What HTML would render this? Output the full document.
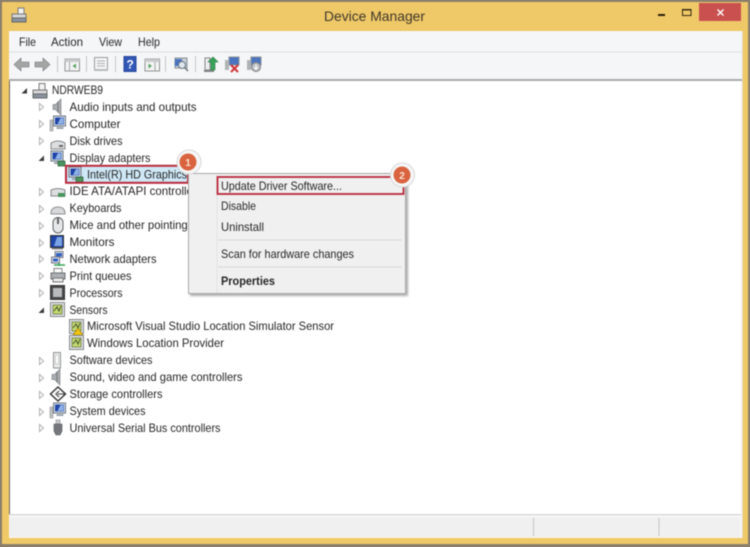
<!DOCTYPE html>
<html><head><meta charset="utf-8"><title>Device Manager</title>
<style>
html,body{margin:0;padding:0;background:#8b7f6c;width:750px;height:547px;overflow:hidden}
svg{display:block;filter:blur(.45px)}
text{font-family:"Liberation Sans",sans-serif;font-size:12px;fill:#262626}
</style></head><body>
<svg width="750" height="547" viewBox="0 0 750 547" xmlns="http://www.w3.org/2000/svg">
<defs>
<filter id="sh" x="-5%" y="-5%" width="110%" height="110%"><feGaussianBlur stdDeviation="1"/></filter>
<path id="ex" d="M39.500 .5v7l4-3.500z" fill="#fff" stroke="#b0b0b0" stroke-width="1"/>
<path id="col" d="M44 1.500v5.500h-5.500z" fill="#3a3a3a"/>
<g id="mon"><rect x="1" y="0" width="12" height="10" fill="#dfe6ee" stroke="#6a7480"/><rect x="2.500" y="1.500" width="9" height="7" fill="#1f45a8"/><path d="M8 2h3v6H5z" fill="#8fb2e6"/><rect x="4" y="11" width="7" height="2" fill="#9aa2a9"/></g>
<g id="card"><rect x="8" y="10" width="7" height="5" fill="#4a9460" stroke="#2a5c38" stroke-width=".7"/></g>
<g id="spk"><path d="M1 5.500h2.500L9 0v16L3.500 10.500H1z" fill="#a9adb1" stroke="#85898d" stroke-width=".7"/><path d="M6 2.500v11" stroke="#777"/></g>
<g id="sens"><rect x=".5" y=".5" width="14" height="14" fill="#dcdfe2" stroke="#85898d"/><rect x="3" y="3" width="9" height="9" fill="#c2da72" stroke="#5e6a33" stroke-width=".7"/><path d="M4 9l3-4 2 4 2-5" fill="none" stroke="#46532a"/></g>
</defs>

<!-- window frame -->
<rect x="-5" y="-5" width="760" height="557" fill="#8b7f6c"/>
<rect x="2" y="2" width="746" height="542" fill="#efc868"/>
<rect x="699" y="3" width="42" height="18" fill="#c9504f"/>
<path d="M717.500 9.500l6 6M723.500 9.500l-6 6" stroke="#fff" stroke-width="1.400"/>
<rect x="658" y="14" width="7" height="2" fill="#2a1f0a"/>
<rect x="682.500" y="9.500" width="8.500" height="6" fill="none" stroke="#35290f" stroke-width="1"/><rect x="682.500" y="9" width="8.500" height="1.500" fill="#35290f"/>
<text x="324" y="21" textLength="101" lengthAdjust="spacingAndGlyphs" style="font-size:14px;fill:#3f3728">Device Manager</text>
<!-- title icon -->
<g transform="translate(11,7)"><rect x="7" y="1" width="6" height="7" fill="#f2f2f2" stroke="#7a7a7a"/><rect x="1" y="7" width="14" height="4" fill="#d6d6d6" stroke="#777"/><rect x="1" y="11" width="14" height="4" fill="#8a94a0" stroke="#666"/></g>

<!-- client -->
<rect x="9" y="31" width="733" height="507" fill="#f5f6f7"/>
<rect x="742" y="31" width="1" height="507" fill="#e4d9b8"/>
<rect x="9" y="51.500" width="733" height="1" fill="#dedfe0"/>
<rect x="9" y="79" width="733" height="2" fill="#a9aaac"/>
<rect x="10" y="81" width="731" height="433" fill="#fff"/>
<rect x="9" y="81" width="1" height="433" fill="#6a675e"/>
<rect x="9" y="514" width="732" height="1.500" fill="#d8d8d8"/>
<rect x="9" y="515.500" width="732" height="1.500" fill="#fafafa"/>
<rect x="10" y="517" width="730" height="20" fill="#f0f0f0"/>
<rect x="9" y="537" width="732" height="1" fill="#faf6ea"/>
<rect x="533" y="518" width="1" height="18" fill="#c4c4c4"/>
<rect x="658.500" y="518" width="1" height="18" fill="#c4c4c4"/>

<!-- menu bar -->
<text x="19" y="46" textLength="17" lengthAdjust="spacingAndGlyphs">File</text>
<text x="51" y="46" textLength="32" lengthAdjust="spacingAndGlyphs">Action</text>
<text x="99" y="46" textLength="23" lengthAdjust="spacingAndGlyphs">View</text>
<text x="138" y="46" textLength="22" lengthAdjust="spacingAndGlyphs">Help</text>

<!-- toolbar -->
<g fill="#a3a5a5" stroke="#8a8c8d" stroke-width=".8" stroke-linejoin="round">
<path d="M14 64.500l7-6.500v4h8v5h-8v4z"/>
<path d="M50 64.500l-7-6.500v4h-8v5h8v4z"/>
</g>
<g fill="#c4c6c7"><rect x="57" y="56" width="1" height="16"/><rect x="86" y="56" width="1" height="16"/><rect x="115" y="56" width="1" height="16"/><rect x="165" y="56" width="1" height="16"/><rect x="195" y="56" width="1" height="16"/></g>
<rect x="65" y="59" width="14.500" height="12" fill="#f3f3f3" stroke="#909395"/><rect x="65" y="59" width="14.500" height="3" fill="#c8cbcd"/><path d="M69.500 62v9" stroke="#a4a6a8"/><path d="M76 63.500v5l-3.500-2.500z" fill="#5aa566"/>
<rect x="94.500" y="57.500" width="13" height="13" fill="#f5f5f5" stroke="#999c9e"/><path d="M97 61h8M97 63.500h8M97 66h8" stroke="#b0b3b5"/><rect x="94" y="69" width="14" height="2" fill="#b8bbbd"/>
<rect x="124" y="56.500" width="12" height="15" fill="#3156b6" stroke="#284699"/><text x="126.500" y="68.500" style="font-size:12px;font-weight:bold;fill:#fff">?</text>
<rect x="145" y="59" width="14.500" height="12" fill="#f3f3f3" stroke="#909395"/><rect x="145" y="59" width="14.500" height="3" fill="#c8cbcd"/><path d="M155 62v9" stroke="#a4a6a8"/><path d="M148.500 63.500v5l3.500-2.500z" fill="#5aa566"/>
<rect x="175" y="58" width="12" height="10" fill="#c8cfd6" stroke="#8a9198"/><rect x="175" y="59" width="7" height="7" fill="#4a74c0"/><circle cx="182" cy="65" r="3.500" fill="#dfe7ee" stroke="#6b7680"/><path d="M185 68l3 3" stroke="#6b7680" stroke-width="1.500"/>
<rect x="205" y="58" width="5" height="12" fill="#eee" stroke="#808386"/><rect x="204" y="70" width="10" height="2" fill="#808386"/><path d="M213 57l5 5h-3v8h-4v-8h-3z" fill="#38a35b" stroke="#2a7a45" stroke-width=".6"/>
<rect x="229" y="57" width="10" height="8" fill="#4a74c0" stroke="#8a9198"/><rect x="225" y="60" width="4" height="10" fill="#b0b3b6"/><path d="M231 65l7 7M238 65l-7 7" stroke="#d1333a" stroke-width="2"/>
<rect x="251" y="57" width="10" height="8" fill="#4a74c0" stroke="#8a9198"/><rect x="247" y="60" width="4" height="10" fill="#b0b3b6"/><circle cx="256" cy="67" r="4.500" fill="#bcbfc2" stroke="#7c7f82"/><path d="M256 64.500v4M254 67l2 2.500 2-2.500" fill="none" stroke="#fff"/>

<!-- expanders -->
<use href="#col" transform="translate(-17,86.500)"/>
<use href="#ex" y="103"/><use href="#ex" y="120"/><use href="#ex" y="137"/>
<use href="#col" y="154"/>
<use href="#ex" y="188"/><use href="#ex" y="205"/><use href="#ex" y="222"/><use href="#ex" y="239"/><use href="#ex" y="255"/><use href="#ex" y="272"/><use href="#ex" y="289"/>
<use href="#col" y="306"/>
<use href="#ex" y="357"/><use href="#ex" y="374"/><use href="#ex" y="391"/><use href="#ex" y="408"/><use href="#ex" y="424"/>

<!-- root icon -->
<g transform="translate(32,83)"><rect x="7" y="0.500" width="6" height="7" fill="#f2f2f2" stroke="#7a7a7a"/><rect x="1" y="7" width="14" height="4" fill="#d6d6d6" stroke="#777"/><rect x="1" y="11" width="14" height="4" fill="#8a94a0" stroke="#666"/></g>
<!-- tree icons -->
<use href="#spk" transform="translate(52,99)"/>
<use href="#mon" transform="translate(52.500,116)"/><rect x="50" y="120" width="3" height="11" fill="#bcbfc2" stroke="#888" stroke-width=".5"/>
<g transform="translate(50,137)"><path d="M1 6q7-4 14 0v6H1z" fill="#dddedf" stroke="#85888b"/><rect x="9" y="8" width="4" height="2" fill="#666"/></g>
<use href="#mon" transform="translate(50,151)"/><use href="#card" transform="translate(50,151)"/>

<!-- selection + red box 1 -->
<rect x="67" y="167" width="120" height="15" fill="#cfe8f6"/>
<use href="#mon" transform="translate(68,167)"/><use href="#card" transform="translate(68,167)"/>

<g transform="translate(50,185)"><path d="M1 5q7-3 14 0v6H1z" fill="#dddedf" stroke="#85888b"/><rect x="8" y="8" width="7" height="4" fill="#4a9460"/></g>
<g transform="translate(50,202)"><path d="M1 10q1-5 7-5t7 5v2H1z" fill="#d6d8da" stroke="#8e9194"/></g>
<g transform="translate(52,217)"><rect x="1" y="0.500" width="10" height="15.500" rx="5" fill="#e6e7e8" stroke="#606366"/><path d="M6 1v6" stroke="#606366" stroke-width="2"/></g>
<g transform="translate(50,235)"><rect x=".5" y=".5" width="13" height="12" fill="#1f45a8" stroke="#333"/><path d="M7 2h5v9H4z" fill="#7aa3e4"/><rect x="2" y="13" width="11" height="1.500" fill="#888"/></g>
<g transform="translate(51,251)"><rect x="4" y="0.500" width="8" height="6" fill="#e1e6ec" stroke="#778"/><rect x="5" y="2" width="6" height="3.500" fill="#3460c0"/><rect x="0.500" y="6" width="8" height="6" fill="#e1e6ec" stroke="#778"/><rect x="2" y="7.500" width="5" height="3" fill="#3460c0"/><path d="M3 14h11M8 12v3" stroke="#38a35b" stroke-width="1.600"/></g>
<g transform="translate(50,268)"><rect x="4" y="0.500" width="8" height="5" fill="#fafafa" stroke="#888"/><rect x="1" y="5" width="14" height="6" fill="#aeb1b4" stroke="#6b6e71"/><rect x="3" y="10" width="10" height="4" fill="#e8e8e8" stroke="#777"/></g>
<g transform="translate(50,285)"><rect x=".5" y=".5" width="14" height="14" fill="#46484a" stroke="#333"/><rect x="3" y="3" width="9" height="9" fill="#b8babc"/></g>
<use href="#sens" transform="translate(50,302)"/>
<use href="#sens" transform="translate(69,319)"/><path d="M78 328l5 7h-10z" fill="#f2c511" stroke="#8a6d00" stroke-width=".6"/>
<use href="#sens" transform="translate(69,335)"/>
<g transform="translate(52,352)"><rect x="1.500" y=".5" width="7" height="15.500" fill="#ececec" stroke="#909395"/><rect x="3.500" y="3" width="3" height="9" fill="#fff" stroke="#b0b3b5" stroke-width=".6"/></g>
<use href="#spk" transform="translate(51,369)"/>
<g transform="translate(50,387)"><path d="M8 0l7.500 7-7.500 7-7.500-7z" fill="#fff" stroke="#3a3a3a" stroke-width="1.500"/><path d="M9 4l-3 3 3 3" fill="none" stroke="#666" stroke-width="1.500"/><path d="M8 7h7" stroke="#3a3a3a"/></g>
<use href="#mon" transform="translate(52.500,403)"/><rect x="50" y="407" width="3" height="11" fill="#bcbfc2" stroke="#888" stroke-width=".5"/>
<g transform="translate(53,420)"><rect x="3" y="0" width="4" height="4" fill="#c8cacc" stroke="#888" stroke-width=".6"/><path d="M1 4h8v7l-2 4H3l-2-4z" fill="#74787c" stroke="#55585b" stroke-width=".6"/></g>

<!-- tree text -->
<text x="52" y="94" textLength="51" lengthAdjust="spacingAndGlyphs">NDRWEB9</text>
<text x="69.500" y="111" textLength="127" lengthAdjust="spacingAndGlyphs">Audio inputs and outputs</text>
<text x="69.500" y="128" textLength="51" lengthAdjust="spacingAndGlyphs">Computer</text>
<text x="69.500" y="145" textLength="53" lengthAdjust="spacingAndGlyphs">Disk drives</text>
<text x="69.500" y="162" textLength="81" lengthAdjust="spacingAndGlyphs">Display adapters</text>
<text x="87" y="178.500" textLength="100" lengthAdjust="spacingAndGlyphs">Intel(R) HD Graphics</text>
<text x="69.500" y="195" textLength="133" lengthAdjust="spacingAndGlyphs">IDE ATA/ATAPI controllers</text>
<text x="69.500" y="212" textLength="52" lengthAdjust="spacingAndGlyphs">Keyboards</text>
<text x="69.500" y="229" textLength="160" lengthAdjust="spacingAndGlyphs">Mice and other pointing devices</text>
<text x="69.500" y="246" textLength="45" lengthAdjust="spacingAndGlyphs">Monitors</text>
<text x="69.500" y="263" textLength="87" lengthAdjust="spacingAndGlyphs">Network adapters</text>
<text x="69.500" y="280" textLength="62" lengthAdjust="spacingAndGlyphs">Print queues</text>
<text x="69.500" y="297" textLength="53" lengthAdjust="spacingAndGlyphs">Processors</text>
<text x="69.500" y="314" textLength="38" lengthAdjust="spacingAndGlyphs">Sensors</text>
<text x="87" y="330" textLength="247" lengthAdjust="spacingAndGlyphs">Microsoft Visual Studio Location Simulator Sensor</text>
<text x="87" y="347" textLength="137" lengthAdjust="spacingAndGlyphs">Windows Location Provider</text>
<text x="69.500" y="364" textLength="83" lengthAdjust="spacingAndGlyphs">Software devices</text>
<text x="69.500" y="381" textLength="173" lengthAdjust="spacingAndGlyphs">Sound, video and game controllers</text>
<text x="69.500" y="398" textLength="93" lengthAdjust="spacingAndGlyphs">Storage controllers</text>
<text x="69.500" y="415" textLength="76" lengthAdjust="spacingAndGlyphs">System devices</text>
<text x="69.500" y="432" textLength="151" lengthAdjust="spacingAndGlyphs">Universal Serial Bus controllers</text>

<rect x="66" y="165.800" width="122" height="17" fill="none" stroke="#b8283a" stroke-width="2"/>

<!-- context menu -->
<rect x="190" y="175" width="218" height="121" fill="#777" opacity=".6" filter="url(#sh)"/>
<rect x="188.500" y="173.500" width="217" height="120" fill="#f0f0f0" stroke="#a8a8a8"/>
<rect x="216.500" y="175" width="1" height="118" fill="#e2e2e2"/>
<rect x="218" y="239.500" width="184" height="1" fill="#d8d8d8"/>
<rect x="218" y="266.500" width="184" height="1" fill="#d8d8d8"/>
<text x="221" y="190" textLength="121" lengthAdjust="spacingAndGlyphs">Update Driver Software...</text>
<text x="221" y="210" textLength="35" lengthAdjust="spacingAndGlyphs">Disable</text>
<text x="221" y="231" textLength="43" lengthAdjust="spacingAndGlyphs">Uninstall</text>
<text x="221" y="258" textLength="133" lengthAdjust="spacingAndGlyphs">Scan for hardware changes</text>
<text x="221" y="285" textLength="54" lengthAdjust="spacingAndGlyphs" style="font-size:12px;font-weight:bold">Properties</text>
<rect x="217.500" y="177" width="186" height="17" fill="none" stroke="#b8283a" stroke-width="1.800"/>

<!-- badges -->
<circle cx="189" cy="162" r="12" fill="#f6f6f6" stroke="#d8d8d8"/>
<circle cx="188" cy="162" r="8.500" fill="#d9633f"/>
<text x="188" y="166" text-anchor="middle" style="font-size:10px;font-weight:bold;fill:#fbe3d4">1</text>
<circle cx="402.500" cy="175" r="12" fill="#f6f6f6" stroke="#d8d8d8"/>
<circle cx="402" cy="175" r="8.500" fill="#d9633f"/>
<text x="402" y="179" text-anchor="middle" style="font-size:10px;font-weight:bold;fill:#fbe3d4">2</text>
</svg>
</body></html>
